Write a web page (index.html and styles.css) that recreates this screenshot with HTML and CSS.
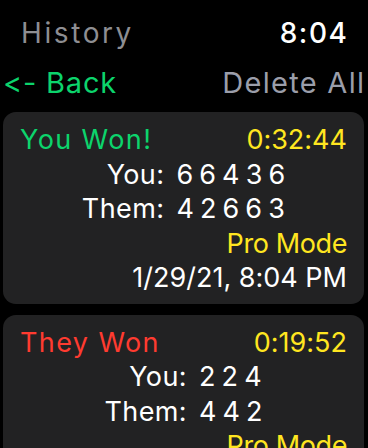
FILE: index.html
```html
<!DOCTYPE html>
<html>
<head>
<meta charset="utf-8">
<link rel="stylesheet" href="styles.css">
</head>
<body>
<div class="screen">
  <header class="status">
    <span class="title">History</span>
    <span class="clock">8:04</span>
  </header>
  <nav class="nav">
    <span class="back">&lt;- Back</span>
    <span class="delete">Delete All</span>
  </nav>
  <main class="list">
    <section class="card">
      <div class="row-top">
        <span class="result win">You Won!</span>
        <span class="time">0:32:44</span>
      </div>
      <div class="scores">
        <div class="labels">
          <span>You:</span>
          <span>Them:</span>
        </div>
        <div class="values">
          <span>6 6 4 3 6</span>
          <span>4 2 6 6 3</span>
        </div>
      </div>
      <div class="mode">Pro Mode</div>
      <div class="date">1/29/21, 8:04 PM</div>
    </section>
    <section class="card">
      <div class="row-top">
        <span class="result lose">They Won</span>
        <span class="time">0:19:52</span>
      </div>
      <div class="scores">
        <div class="labels">
          <span>You:</span>
          <span>Them:</span>
        </div>
        <div class="values">
          <span>2 2 4</span>
          <span>4 4 2</span>
        </div>
      </div>
      <div class="mode">Pro Mode</div>
      <div class="date">1/29/21, 8:03 PM</div>
    </section>
  </main>
</div>
</body>
</html>
```
FILE: styles.css
```css
html, body {
  margin: 0;
  padding: 0;
  background: #000;
}
body {
  font-family: Inter, "Noto Sans", sans-serif;
  font-variant-ligatures: none;
  font-feature-settings: "calt" 0, "liga" 0;
  color: #fff;
  width: 368px;
  height: 448px;
  overflow: hidden;
}
.screen {
  display: flex;
  flex-direction: column;
}
.status {
  display: flex;
  justify-content: space-between;
  align-items: baseline;
  padding: 16px 21px 0 21px;
  height: 34px;
  line-height: 34px;
  font-size: 28px;
}
.title {
  color: #8e8e92;
  letter-spacing: 2.6px;
}
.clock {
  color: #fff;
  font-weight: 500;
  letter-spacing: 1.6px;
  margin-right: -1.6px;
}
.nav {
  display: flex;
  justify-content: space-between;
  padding: 16px 4px 0 3px;
  height: 34px;
  line-height: 34px;
  font-size: 29px;
}
.back {
  color: #0cd46c;
  letter-spacing: 0.8px;
}
.delete {
  color: #9b9eaa;
  letter-spacing: 1.3px;
  margin-right: -1.3px;
}
.list {
  display: flex;
  flex-direction: column;
  gap: 11px;
  padding: 12px 4px 0 3px;
}
.card {
  background: #222223;
  border-radius: 13px;
  padding: 11px 17px 8px 17px;
  font-size: 27px;
  line-height: 34.5px;
}
.row-top {
  display: flex;
  justify-content: space-between;
}
.result {
  letter-spacing: 1.4px;
}
.win {
  color: #0cd46c;
}
.lose {
  color: #ff3b30;
}
.time {
  color: #ffe620;
}
.scores {
  display: flex;
  justify-content: center;
  gap: 12px;
}
.labels {
  display: flex;
  flex-direction: column;
  align-items: flex-end;
  letter-spacing: 0.4px;
}
.values {
  display: flex;
  flex-direction: column;
  align-items: flex-start;
  word-spacing: -1.5px;
}
.mode {
  text-align: right;
  color: #ffe620;
  letter-spacing: -0.4px;
}
.date {
  text-align: right;
}
```
